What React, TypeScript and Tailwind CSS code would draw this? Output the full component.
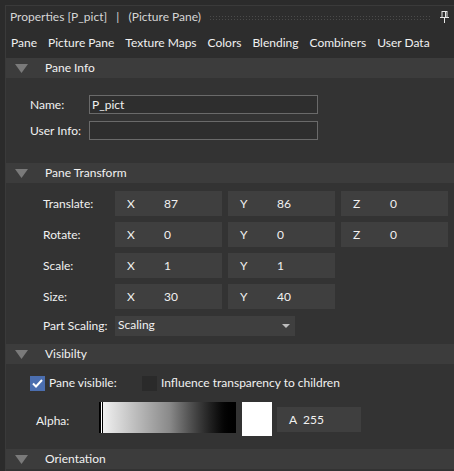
import React from "react";

const font = { fontFamily: 'Lato, "Noto Sans", sans-serif' };

const SectionHeader: React.FC<{ title: string }> = ({ title }) => (
  <div className="h-[20px] bg-[#3c3c3c] flex items-center text-[12px] text-[#f1f1f1]">
    <svg width="13" height="9" viewBox="0 0 13 9" className="ml-[9px] mr-[17px]">
      <polygon points="0,0 13,0 6.5,9" fill="#7a7a7a" />
    </svg>
    <span>{title}</span>
  </div>
);

const Field: React.FC<{ axis: string; value: string }> = ({ axis, value }) => (
  <div className="w-[107px] h-[25px] bg-[#3f3f3f] flex items-center text-[12px] text-[#f1f1f1]">
    <span className="w-[49px] pl-[12px]">{axis}</span>
    <span>{value}</span>
  </div>
);

const TransformRow: React.FC<{ label: string; vals: [string, string][] }> = ({ label, vals }) => (
  <div className="h-[25px] flex items-center">
    <span className="w-[109px] pl-[37px] whitespace-nowrap text-[12px] text-[#f1f1f1]">{label}</span>
    <div className="flex gap-[6px]">
      {vals.map(([a, v]) => (
        <Field key={a} axis={a} value={v} />
      ))}
    </div>
  </div>
);

export default function App() {
  return (
    <div className="w-[454px] h-[471px] bg-[#2b2b2b] overflow-hidden" style={font}>
      <div className="h-[5px]" />
      <div className="ml-[5px] h-[466px] border-l border-t border-[#3a3a3a] bg-[#333333] flex flex-col">
        {/* title bar */}
        <div className="h-[21px] bg-[#2d2d2d] flex items-center pl-[4px] pr-[4px] text-[12px] text-[#d6d6d6]">
          <span className="whitespace-pre">Properties [P_pict]   |   (Picture Pane)</span>
          <div
            className="flex-1 h-[5px] mx-[8px] mt-[1px]"
            style={{
              backgroundImage: "radial-gradient(#4a4a4a 0.6px, transparent 0.8px)",
              backgroundSize: "3px 3px",
            }}
          />
          <svg width="9" height="12" viewBox="0 0 9 12" className="mr-[1px]">
            <rect x="2" y="0.5" width="5" height="6" fill="none" stroke="#e6e6e6" strokeWidth="1" />
            <rect x="5" y="1" width="1" height="5" fill="#e6e6e6" />
            <rect x="0" y="6" width="9" height="1" fill="#e6e6e6" />
            <rect x="4" y="7" width="1" height="5" fill="#e6e6e6" />
          </svg>
        </div>
        {/* tabs */}
        <div className="h-[31px] bg-[#2d2d2d] flex items-center gap-[11px] pl-[5px] text-[12px] text-[#f1f1f1] whitespace-nowrap">
          {["Pane", "Picture Pane", "Texture Maps", "Colors", "Blending", "Combiners", "User Data"].map(t => (
            <span key={t}>{t}</span>
          ))}
        </div>

        <SectionHeader title="Pane Info" />
        <div className="h-[85px] pt-[17px] flex flex-col gap-[7px]">
          <div className="flex items-center h-[19px]">
            <span className="w-[83px] pl-[24px] text-[12px] text-[#f1f1f1]">Name:</span>
            <div className="w-[229px] h-[19px] border border-[#6a6a6a] bg-[#2e2e2e] text-[12px] text-[#f1f1f1] pl-[2px] leading-[17px]">
              P_pict
            </div>
          </div>
          <div className="flex items-center h-[19px]">
            <span className="w-[83px] pl-[24px] text-[12px] text-[#f1f1f1]">User Info:</span>
            <div className="w-[229px] h-[19px] border border-[#6a6a6a] bg-[#2e2e2e]" />
          </div>
        </div>

        <SectionHeader title="Pane Transform" />
        <div className="h-[161px] pt-[8px] flex flex-col gap-[6px]">
          <TransformRow label="Translate:" vals={[["X", "87"], ["Y", "86"], ["Z", "0"]]} />
          <TransformRow label="Rotate:" vals={[["X", "0"], ["Y", "0"], ["Z", "0"]]} />
          <TransformRow label="Scale:" vals={[["X", "1"], ["Y", "1"]]} />
          <TransformRow label="Size:" vals={[["X", "30"], ["Y", "40"]]} />
          <div className="h-[20px] flex items-center mt-[1px]">
            <span className="w-[109px] pl-[37px] whitespace-nowrap text-[12px] text-[#f1f1f1]">Part Scaling:</span>
            <div className="w-[180px] h-[20px] bg-[#3f3f3f] flex items-center justify-between pl-[3px] pr-[5px] text-[12px] text-[#f1f1f1]">
              <span className="-mt-[2px]">Scaling</span>
              <svg width="8" height="4" viewBox="0 0 8 4">
                <polygon points="0,0 8,0 4,4" fill="#bdbdbd" />
              </svg>
            </div>
          </div>
        </div>

        <SectionHeader title="Visibilty" />
        <div className="h-[85px] flex flex-col">
          <div className="h-[38px] flex items-center pl-[24px] text-[12px] text-[#f1f1f1]">
            <div className="w-[15px] h-[15px] bg-[#4b6eaf] flex items-center justify-center">
              <svg width="11" height="9" viewBox="0 0 11 9">
                <path d="M1 4.5 L4 7.5 L10 1" fill="none" stroke="#ffffff" strokeWidth="2" />
              </svg>
            </div>
            <span className="ml-[4px] w-[93px]">Pane visibile:</span>
            <div className="w-[15px] h-[15px] bg-[#2a2a2a]" />
            <span className="ml-[4px]">Influence transparency to children</span>
          </div>
          <div className="flex items-start">
            <span className="w-[93px] pl-[30px] text-[12px] text-[#f1f1f1] mt-[10px]">Alpha:</span>
            <div className="flex h-[31px] w-[137px]">
              <div className="w-[2px] bg-black" />
              <div className="w-[1px] bg-white" />
              <div className="w-[1px] bg-black" />
              <div className="flex-1 bg-gradient-to-r from-[#f0f0f0] via-[#8a8a8a] to-black" />
            </div>
            <div className="ml-[6px] w-[30px] h-[34px] bg-white" />
            <div className="ml-[5px] mt-[5px] w-[84px] h-[25px] bg-[#3f3f3f] flex items-center pl-[12px] text-[12px] text-[#f1f1f1]">
              <span className="w-[14px]">A</span>
              <span>255</span>
            </div>
          </div>
        </div>

        <SectionHeader title="Orientation" />
        <div className="flex-1" />
      </div>
    </div>
  );
}
